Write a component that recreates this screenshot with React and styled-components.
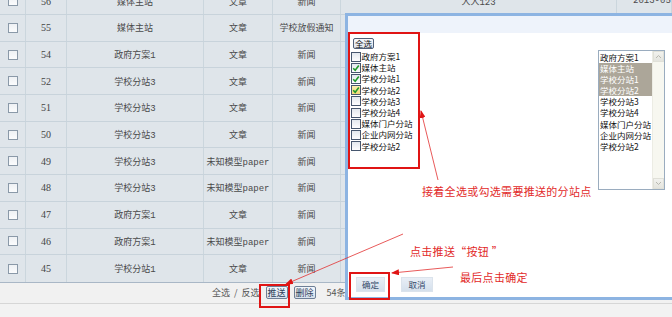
import React from "react";
import styled, { createGlobalStyle } from "styled-components";

const GlobalStyle = createGlobalStyle`
  html, body { margin: 0; padding: 0; background: #f2f2f2; overflow: hidden; }
  * { box-sizing: border-box; }
`;

const CJK = `"Noto Sans CJK SC", "Noto Sans", sans-serif`;
const MIXED = `"Liberation Mono", "Noto Sans CJK SC", monospace`;

const Page = styled.div`
  position: relative;
  width: 672px;
  height: 317px;
  overflow: hidden;
  background: #f2f2f2;
  font-family: ${CJK};
`;

const Table = styled.div`
  margin-top: -11.7px;
  border-bottom: 1px solid #a9b7c6;
`;

const Row = styled.div`
  display: grid;
  grid-template-columns: 26px 41px 137px 69px 68px 276px 1fr;
  height: 26.7px;
  background: #dfe5ea;
  border-bottom: 1px solid #c8d3db;
  &:last-child { border-bottom: none; }
`;

const Cell = styled.div`
  display: flex;
  align-items: center;
  justify-content: ${(p) => (p.$left ? "flex-start" : "center")};
  padding-left: ${(p) => (p.$left ? "16px" : "0")};
  border-right: 1px solid #cbd6dd;
  font-family: ${MIXED};
  font-size: 9px;
  color: #4a4a4a;
  white-space: nowrap;
  overflow: hidden;
`;

const Num = styled.span`
  font-family: "Liberation Serif", serif;
  font-size: 10px;
  color: #444;
`;

const TableBox = styled.span`
  display: block;
  width: 10px;
  height: 10px;
  border: 1px solid #8a99a8;
  background: linear-gradient(#eef1f4, #fbfcfd);
`;

const Footer = styled.div`
  display: flex;
  align-items: center;
  gap: 6px;
  height: 21px;
  padding-left: 212px;
  background: #f1f1f1;
  border-bottom: 1px solid #d6d6d6;
  font-size: 9px;
  color: #555;
`;

const Link = styled.span`
  color: #555;
  word-spacing: 2px;
`;

const SmallBtn = styled.span`
  display: inline-flex;
  align-items: center;
  height: 13px;
  padding: 0 1px;
  border: 1px solid #6e7f96;
  border-radius: 2px;
  background: linear-gradient(#f2f6fb, #d9e3ef);
  color: #2e3f5a;
  font-size: 9px;
`;

const Count = styled.span`
  margin-left: 5px;
  color: #555;
`;

const Dialog = styled.div`
  position: absolute;
  left: 345px;
  top: 12.5px;
  width: 340px;
  height: 287px;
  border: 3px solid #8db4e2;
  background: #fff;
  display: flex;
  flex-direction: column;
`;

const DialogHead = styled.div`
  height: 17.5px;
  background: #eef3fb;
`;

const DialogBody = styled.div`
  flex: 1;
  display: flex;
  flex-direction: column;
  padding: 5px 0 5px 4px;
`;

const Top = styled.div`
  display: flex;
  align-items: flex-start;
`;

const CheckPanel = styled.div`
  display: flex;
  flex-direction: column;
  width: 246px;
`;

const AllBtn = styled.span`
  align-self: flex-start;
  display: inline-flex;
  align-items: center;
  height: 11px;
  padding: 0 1px;
  margin-left: 1px;
  margin-bottom: 2px;
  border: 1px solid #4f5f78;
  border-radius: 2px;
  background: linear-gradient(#f6f8fb, #dde4ee);
  font-size: 8.5px;
  color: #111;
  line-height: 1;
`;

const CheckRow = styled.label`
  display: flex;
  align-items: center;
  height: 11.2px;
  line-height: 11px;
  margin-left: -1px;
  font-size: 8.5px;
  color: #111;
  white-space: nowrap;
`;

const Box = styled.span`
  display: inline-flex;
  align-items: center;
  justify-content: center;
  flex: none;
  width: 10px;
  height: 10px;
  margin-right: 0.5px;
  border: 1px solid #46566e;
  background: ${(p) =>
    p.$hover ? "linear-gradient(#fbeeb0, #f0d878)" : "linear-gradient(#e3e8ee, #fdfdfe)"};
`;

const ListBox = styled.div`
  margin-top: 12px;
  width: 67px;
  height: 140px;
  border: 1px solid #9aacbf;
  display: flex;
  background: #fff;
`;

const Options = styled.div`
  flex: 1;
  padding-top: 0.5px;
`;

const Option = styled.div`
  height: 11.2px;
  line-height: 11px;
  padding-left: 1px;
  font-size: 8.5px;
  white-space: nowrap;
  overflow: hidden;
  color: ${(p) => (p.$sel ? "#fff" : "#111")};
  background: ${(p) => (p.$sel ? "#aca699" : "transparent")};
`;

const Scroll = styled.div`
  width: 12px;
  background: #f7f7f0;
  border-left: 1px solid #ecece4;
  display: flex;
  flex-direction: column;
  justify-content: space-between;
`;

const ScrollBtn = styled.div`
  height: 11px;
  display: flex;
  align-items: center;
  justify-content: center;
  background: linear-gradient(#f2f2ee, #e4e4de);
  border: 1px solid #e0e0d8;
`;

const Actions = styled.div`
  margin-top: auto;
  display: flex;
  gap: 16px;
  padding-left: 4px;
`;

const ActionBtn = styled.span`
  display: inline-flex;
  align-items: center;
  justify-content: center;
  width: ${(p) => p.$w}px;
  height: 15px;
  background: linear-gradient(#e8eef6, #d5e0ec);
  border: 1px solid #dbe3ec;
  font-size: 8.5px;
  color: #334a6a;
`;

const Overlay = styled.svg`
  position: absolute;
  left: 0;
  top: 0;
  pointer-events: none;
`;

const RedBox = styled.div`
  position: absolute;
  left: ${(p) => p.$x}px;
  top: ${(p) => p.$y}px;
  width: ${(p) => p.$w}px;
  height: ${(p) => p.$h}px;
  border: 2px solid #e01414;
  pointer-events: none;
`;

const Note = styled.div`
  position: absolute;
  left: ${(p) => p.$x}px;
  top: ${(p) => p.$y}px;
  font-family: ${CJK};
  font-size: 11px;
  letter-spacing: 0.3px;
  line-height: 14px;
  color: #e22a2a;
  white-space: nowrap;
`;

const rows = [
  ["56", "媒体主站", "文章", "新闻", "人人123", "2013-05-20"],
  ["55", "媒体主站", "文章", "学校放假通知", "", ""],
  ["54", "政府方案1", "文章", "新闻", "", ""],
  ["52", "学校分站3", "文章", "新闻", "", ""],
  ["51", "学校分站3", "文章", "新闻", "", ""],
  ["50", "学校分站3", "文章", "新闻", "", ""],
  ["49", "学校分站3", "未知模型paper", "新闻", "", ""],
  ["48", "学校分站3", "未知模型paper", "新闻", "", ""],
  ["47", "政府方案1", "文章", "新闻", "", ""],
  ["46", "政府方案1", "未知模型paper", "新闻", "", ""],
  ["45", "学校分站1", "文章", "新闻", "", ""],
];

const sites = [
  { name: "政府方案1" },
  { name: "媒体主站", checked: true },
  { name: "学校分站1", checked: true },
  { name: "学校分站2", checked: true, hover: true },
  { name: "学校分站3" },
  { name: "学校分站4" },
  { name: "媒体门户分站" },
  { name: "企业内网分站" },
  { name: "学校分站2" },
];

const Check = () => (
  <svg width="8" height="8" viewBox="0 0 8 8">
    <path d="M1.2 4.2 L3.2 6.2 L6.8 1.6" fill="none" stroke="#1f9a2a" strokeWidth="1.6" />
  </svg>
);

const Chevron = ({ up }) => (
  <svg width="7" height="5" viewBox="0 0 7 5">
    <path d={up ? "M1 4 L3.5 1.5 L6 4" : "M1 1 L3.5 3.5 L6 1"} fill="none" stroke="#b8b8b0" strokeWidth="1" />
  </svg>
);

export default function App() {
  return (
    <Page>
      <GlobalStyle />
      <Table>
        {rows.map((r) => (
          <Row key={r[0]}>
            <Cell>
              <TableBox />
            </Cell>
            <Cell>
              <Num>{r[0]}</Num>
            </Cell>
            <Cell>{r[1]}</Cell>
            <Cell>{r[2]}</Cell>
            <Cell>{r[3]}</Cell>
            <Cell>{r[4]}</Cell>
            <Cell $left>{r[5]}</Cell>
          </Row>
        ))}
      </Table>
      <Footer>
        <Link>全选 / 反选</Link>
        <SmallBtn>推送</SmallBtn>
        <SmallBtn>删除</SmallBtn>
        <Count>54条</Count>
      </Footer>

      <Dialog>
        <DialogHead />
        <DialogBody>
          <Top>
            <CheckPanel>
              <AllBtn>全选</AllBtn>
              {sites.map((s, i) => (
                <CheckRow key={i}>
                  <Box $hover={s.hover}>{s.checked && <Check />}</Box>
                  {s.name}
                </CheckRow>
              ))}
            </CheckPanel>
            <ListBox>
              <Options>
                {sites.map((s, i) => (
                  <Option key={i} $sel={s.checked}>
                    {s.name}
                  </Option>
                ))}
              </Options>
              <Scroll>
                <ScrollBtn>
                  <Chevron up />
                </ScrollBtn>
                <ScrollBtn>
                  <Chevron />
                </ScrollBtn>
              </Scroll>
            </ListBox>
          </Top>
          <Actions>
            <ActionBtn $w={29}>确定</ActionBtn>
            <ActionBtn $w={32}>取消</ActionBtn>
          </Actions>
        </DialogBody>
      </Dialog>

      <RedBox $x={348} $y={32} $w={72} $h={137} />
      <RedBox $x={349} $y={272} $w={41} $h={28} />
      <RedBox $x={259} $y={284} $w={31} $h={24} />

      <Overlay width="672" height="317" viewBox="0 0 672 317">
        <defs>
          <marker id="ah" markerWidth="8" markerHeight="6" refX="7" refY="3" orient="auto" markerUnits="userSpaceOnUse">
            <path d="M0 0 L8 3 L0 6 Z" fill="#e01414" />
          </marker>
        </defs>
        <line x1="438" y1="180" x2="421" y2="111" stroke="#e23030" strokeWidth="0.8" markerEnd="url(#ah)" />
        <line x1="403" y1="234" x2="286" y2="284" stroke="#e23030" strokeWidth="0.8" markerEnd="url(#ah)" />
        <line x1="453" y1="267" x2="392" y2="273" stroke="#e23030" strokeWidth="0.8" markerEnd="url(#ah)" />
      </Overlay>

      <Note $x={422} $y={184}>接着全选或勾选需要推送的分站点</Note>
      <Note $x={410} $y={244}>点击推送“按钮 ”</Note>
      <Note $x={460} $y={270}>最后点击确定</Note>
    </Page>
  );
}
